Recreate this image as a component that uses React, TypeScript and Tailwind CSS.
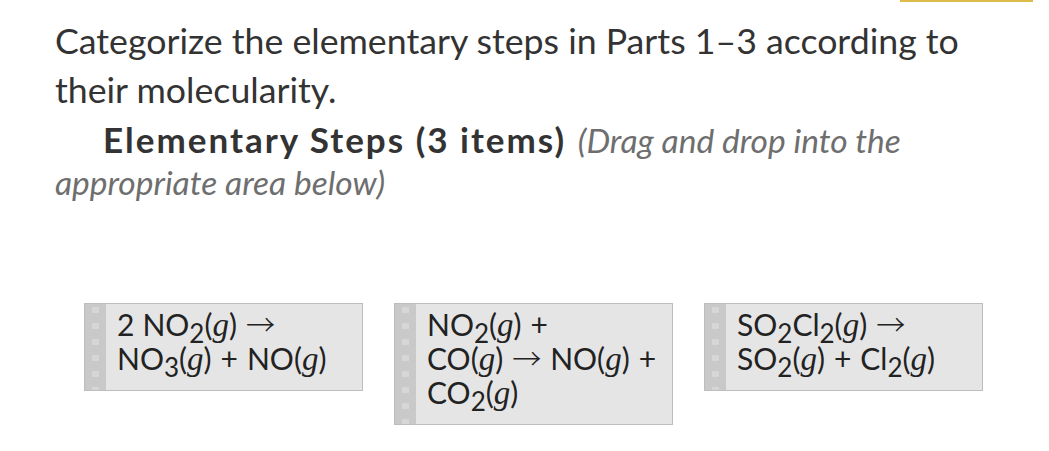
import React from "react";

// Subscript digit, nudged below the baseline without growing the line box
function Sub({ children }: { children: React.ReactNode }) {
  return <span className="relative top-[7px] text-[26px] leading-[20px]">{children}</span>;
}

// Phase label "(g)" with a math-italic g
function Gas() {
  return (
    <span>
      (<span className="font-['Liberation_Serif'] text-[33px] leading-[20px] italic">g</span>)
    </span>
  );
}

function Arrow() {
  return (
    <span className="mx-[9px] font-['Noto_Sans_CJK_JP'] text-[29px] leading-[20px] font-light">→</span>
  );
}

function Plus() {
  return <span className="mx-[9px]">+</span>;
}

// Drag handle: grey strip with a column of lighter dots
function Grip() {
  return (
    <div className="w-[21px] shrink-0 bg-[#c9c9c9] bg-[linear-gradient(to_bottom,#d6d6d6_6px,transparent_6px)] bg-[length:7px_16px] bg-[position:7px_3px] bg-repeat-y" />
  );
}

function StepCard({ children }: { children: React.ReactNode }) {
  return (
    <div className="flex w-[279px] border border-[#bdbdbd] bg-[#e5e5e5]">
      <Grip />
      <div className="flex-1 pb-[15px] pl-[11px] pr-[2px] pt-[3px] text-[30px] leading-[34px] text-[#222222]">
        {children}
      </div>
    </div>
  );
}

export default function App() {
  return (
    <div className="min-h-[451px] w-full bg-white font-['Lato'] text-[#333333]">
      <div className="flex justify-end pr-[16px]">
        <div className="h-[2px] w-[133px] bg-[#dcbb4a]" />
      </div>

      <p className="mt-[14px] px-[55px] text-[35.7px] leading-[49px]">
        Categorize the elementary steps in Parts 1–3 according to their molecularity.
      </p>

      <div className="mt-[4px] px-[55px] indent-[48px] text-[34px] leading-[42px]">
        <span className="text-[35px] font-bold tracking-[2px]">Elementary Steps (3 items)</span>{" "}
        <span className="ml-[3px] text-[33.5px] italic text-[#6e6e6e]">
          (Drag and drop into the appropriate area below)
        </span>
      </div>

      <div className="mt-[100px] flex items-start gap-[31px] pl-[84px]">
        <StepCard>
          <span className="mr-[8px]">2</span>NO<Sub>2</Sub>
          <Gas />
          <Arrow />
          <br />
          NO<Sub>3</Sub>
          <Gas />
          <Plus />
          NO
          <Gas />
        </StepCard>

        <StepCard>
          NO<Sub>2</Sub>
          <Gas />
          <Plus />
          <br />
          CO
          <Gas />
          <Arrow />
          NO
          <Gas />
          <Plus />
          <br />
          CO<Sub>2</Sub>
          <Gas />
        </StepCard>

        <StepCard>
          SO<Sub>2</Sub>Cl<Sub>2</Sub>
          <Gas />
          <Arrow />
          <br />
          SO<Sub>2</Sub>
          <Gas />
          <Plus />
          Cl<Sub>2</Sub>
          <Gas />
        </StepCard>
      </div>
    </div>
  );
}
